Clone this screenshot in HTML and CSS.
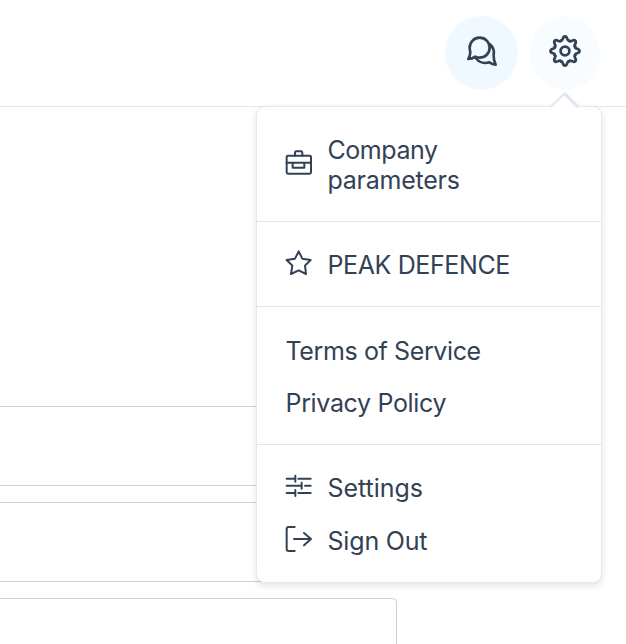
FILE: index.html
```html
<!DOCTYPE html>
<html lang="en">
<head>
<meta charset="utf-8">
<title>Account menu</title>
<link rel="stylesheet" href="styles.css">
</head>
<body>
<header class="topbar">
  <button class="round chat" aria-label="Messages">
    <svg width="32" height="34" viewBox="90 85 96 102"><path d="M103 139C103 148 100 154 97 160Q109 160 118 153Q124 156 131 156A30 30 0 1 0 101 126Q101 133 103 139ZM162 116C172 125 175 137 173 149C172 159 175 168 179 177Q169 176 160 170C144 175 128 169 119 157"/></svg>
  </button>
  <button class="round gear" aria-label="Options">
    <svg width="34" height="34" viewBox="-17 -17 34 34">
      <defs><path id="tooth" d="M-4.2 -10.2C-1.6 -9.6 -3 -14.5 0 -14.5S1.6 -9.6 4.2 -10.2"/></defs>
      <use href="#tooth"/><use href="#tooth" transform="rotate(45)"/><use href="#tooth" transform="rotate(90)"/><use href="#tooth" transform="rotate(135)"/><use href="#tooth" transform="rotate(180)"/><use href="#tooth" transform="rotate(225)"/><use href="#tooth" transform="rotate(270)"/><use href="#tooth" transform="rotate(315)"/>
      <circle r="4.4"/>
    </svg>
  </button>
</header>
<main class="content">
  <div class="field"></div>
  <div class="field"></div>
  <div class="field last"></div>
</main>
<nav class="menu">
  <svg class="arrow" width="30" height="16" viewBox="0 0 30 16"><path class="face" d="M1 16L15 2L29 16Z"/><path class="left" d="M1 14.5L15 1"/><path class="right" d="M14.5 1.5L28 15"/></svg>
  <section class="group company">
    <a class="item"><svg class="icon" viewBox="105 143 84 84"><rect x="110" y="166" width="73" height="54" rx="4"/><path d="M135 166V157Q135 153 139 153H153Q157 153 157 157V166M110 187H183M128 188V202H163V188"/></svg><span class="t-company">Company<br><span class="t-params">parameters</span></span></a>
  </section>
  <section class="group peak">
    <a class="item"><svg class="icon" viewBox="105 58 84 84"><path d="M146 65L157 87L182 91L165 108L168 133L146 122L123 133L127 108L110 91L135 87Z"/></svg><span class="t-peak">PEAK DEFENCE</span></a>
  </section>
  <section class="group legal">
    <a class="item"><span class="t-terms">Terms of Service</span></a>
    <a class="item"><span class="t-privacy">Privacy Policy</span></a>
  </section>
  <section class="group account">
    <a class="item"><svg class="icon" viewBox="105 36 84 84"><path d="M110 56H136M145 56H182M136 47V65M110 77H155M165 77H182M155 68V86M110 99H136M145 99H182M136 90V108"/></svg><span class="t-settings">Settings</span></a>
    <a class="item"><svg class="icon" viewBox="105 194 84 84"><path d="M134 200H116Q110 200 110 206V266Q110 272 116 272H134M132 236H183M162 218L183 236L162 255"/></svg><span class="t-sign">Sign Out</span></a>
  </section>
</nav>
</body>
</html>
```
FILE: styles.css
```css
* { box-sizing: border-box; }
body {
  margin: 0;
  height: 644px;
  position: relative;
  overflow: hidden;
  background: #fff;
  color: #334155;
  font: 25px/30px Inter, sans-serif;
}
svg { fill: none; stroke: #334155; stroke-linecap: round; stroke-linejoin: round; display: block; }
.topbar {
  height: 107px;
  border-bottom: 1px solid #e2e8f0;
  display: flex;
  justify-content: flex-end;
  gap: 12px;
  padding: 16px 26px 0 0;
}
.round { border: 0; border-radius: 50%; height: 74px; padding: 0 0 4px; display: flex; align-items: center; justify-content: center; }
.chat { width: 73px; background: #f0f9ff; }
.chat svg { stroke-width: 8; }
.gear { width: 70px; background: #f8fcff; }
.gear svg { stroke-width: 2.8; }
.content { height: 537px; display: flex; flex-direction: column; gap: 16px; padding-top: 299px; }
.field {
  flex: none;
  width: 397px;
  height: 80px;
  border: 1px solid #cbd0d9;
  border-left: 0;
  border-radius: 0 5px 5px 0;
}
.last { flex: 1; border-bottom: 0; border-bottom-right-radius: 0; }
.menu {
  position: absolute;
  left: 255.5px;
  top: 106px;
  width: 346px;
  height: 477px;
  background: #fff;
  border: 1px solid #e2e8f0;
  border-radius: 9px;
  box-shadow: 0 3px 7px rgba(15, 23, 42, .12);
}
.arrow { position: absolute; left: 293px; top: -15px; }
.arrow .face { fill: #fff; stroke: none; }
.arrow .left { stroke: #e2e8f0; stroke-width: 2; stroke-linecap: butt; }
.arrow .right { stroke: #e2e8f0; stroke-width: 3.5; stroke-linecap: butt; }
.group { padding-left: 28px; display: flex; flex-direction: column; }
.group + .group { border-top: 1px solid #e2e4ea; }
.item { display: flex; align-items: center; gap: 15px; white-space: nowrap; }
.icon { width: 28px; height: 28px; stroke-width: 6; position: relative; top: -2px; }
.company .icon { top: -3px; }
.company { height: 114px; padding-top: 28px; }
.peak { height: 85px; padding-top: 28px; }
.legal { height: 138px; padding: 29px 0 0 29px; gap: 22px; }
.account { padding-top: 28px; gap: 23px; }
.t-company { letter-spacing: -.45px; }
.t-params { letter-spacing: -.25px; }
.t-peak, .t-terms { letter-spacing: -.38px; }
.t-privacy { letter-spacing: -.34px; }
.t-settings { letter-spacing: -.05px; }
.t-sign { letter-spacing: -.18px; }
```
